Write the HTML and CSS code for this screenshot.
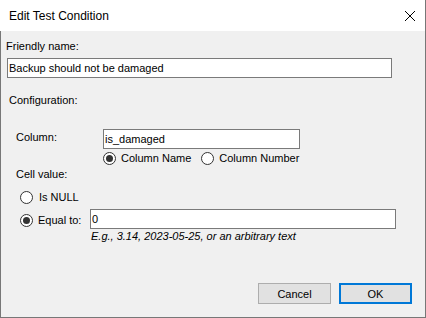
FILE: index.html
```html
<!DOCTYPE html>
<html lang="en">

<head>
    <meta charset="UTF-8">
    <meta name="viewport" content="width=device-width, initial-scale=1.0">
    <title>Edit Test Condition</title>
    <link rel="stylesheet" href="styles.css">
</head>

<body>
    <div class="dialog">
        <div class="titlebar">
            <span class="title">Edit Test Condition</span>
            <button class="close" type="button" aria-label="Close">
                <svg width="10" height="10" viewBox="0 0 10 10">
                    <path d="M0 0L10 10M10 0L0 10" stroke="#000" stroke-width="1" fill="none" />
                </svg>
            </button>
        </div>
        <form class="content" action="#">
            <label class="name-label" for="name">Friendly name:</label>
            <input class="text name-input" type="text" id="name" value="Backup should not be damaged">

            <div class="section-label">Configuration:</div>

            <div class="column-row">
                <label class="column-label" for="column">Column:</label>
                <div class="column-field">
                    <input class="text column-input" type="text" id="column" value="is_damaged">
                    <div class="radio-row">
                        <label class="radio first"><span class="dot checked"></span>Column Name</label>
                        <label class="radio"><span class="dot"></span>Column Number</label>
                    </div>
                </div>
            </div>

            <div class="cell-label">Cell value:</div>

            <label class="radio null-option"><span class="dot"></span>Is NULL</label>

            <div class="equal-row">
                <label class="radio equal-option"><span class="dot checked"></span>Equal to:</label>
                <div class="equal-field">
                    <input class="text equal-input" type="text" value="0">
                    <div class="hint">E.g., 3.14, 2023-05-25, or an arbitrary text</div>
                </div>
            </div>

            <div class="buttons">
                <button type="button" class="btn">Cancel</button>
                <button type="submit" class="btn primary">OK</button>
            </div>
        </form>
    </div>
</body>

</html>
```

FILE: styles.css
```css
* {
    margin: 0;
    padding: 0;
    box-sizing: border-box;
    font-family: "Liberation Sans", Arial, Helvetica, sans-serif;
}

body {
    background: #f0f0f0;
    color: #000;
}

.dialog {
    width: 426px;
    height: 318px;
    display: flex;
    flex-direction: column;
    background: #f0f0f0;
    border-right: 1px solid #777;
    border-bottom: 1px solid #777;
}

.titlebar {
    height: 31px;
    flex-shrink: 0;
    display: flex;
    align-items: center;
    background: #fff;
    padding: 1px 10px 0 9px;
}

.title {
    font-size: 12px;
}

.close {
    margin-left: auto;
    width: 10px;
    height: 10px;
    border: 0;
    background: none;
    display: flex;
    margin-top: -1px;
}

.content {
    flex: 1;
    display: flex;
    flex-direction: column;
    align-items: flex-start;
    border-left: 1px solid #777;
    padding: 9px 13px 13px 0;
    font-size: 11px;
    line-height: 13px;
}

.text {
    height: 20px;
    border: 1px solid #7a7a7a;
    background: #fff;
    padding: 0 1px;
    font-size: 11px;
    outline: 0;
    color: #000;
}

.name-label {
    margin-left: 5px;
}

.name-input {
    margin: 5px 0 0 6px;
    width: 385px;
}

.section-label {
    margin: 16px 0 0 8px;
}

.column-row {
    display: flex;
    margin: 22px 0 0 15px;
}

.column-label {
    width: 87px;
    margin-top: 2px;
}

.column-input {
    width: 197px;
}

.radio-row {
    display: flex;
    gap: 10px;
    margin-top: 3px;
}

.radio {
    display: flex;
    align-items: center;
    gap: 5px;
    height: 13px;
}

.dot {
    width: 13px;
    height: 13px;
    border: 1px solid #333;
    border-radius: 50%;
    background: #fff;
    display: flex;
    align-items: center;
    justify-content: center;
}

.dot.checked::after {
    content: "";
    width: 7px;
    height: 7px;
    border-radius: 50%;
    background: #333;
}

.cell-label {
    margin: 3px 0 0 15px;
}

.null-option {
    margin: 10px 0 0 19px;
    gap: 6px;
}

.equal-row {
    display: flex;
    margin: 5px 0 0 19px;
}

.equal-option {
    width: 70px;
    margin-top: 5px;
}

.equal-input {
    width: 306px;
}

.hint {
    font-style: italic;
    margin: 1px 0 0 1px;
}

.buttons {
    margin-top: auto;
    align-self: flex-end;
    display: flex;
    gap: 8px;
}

.btn {
    width: 73px;
    height: 21px;
    background: #e1e1e1;
    border: 1px solid #adadad;
    font-size: 11px;
    color: #000;
}

.btn.primary {
    border: 2px solid #0078d7;
}
```
